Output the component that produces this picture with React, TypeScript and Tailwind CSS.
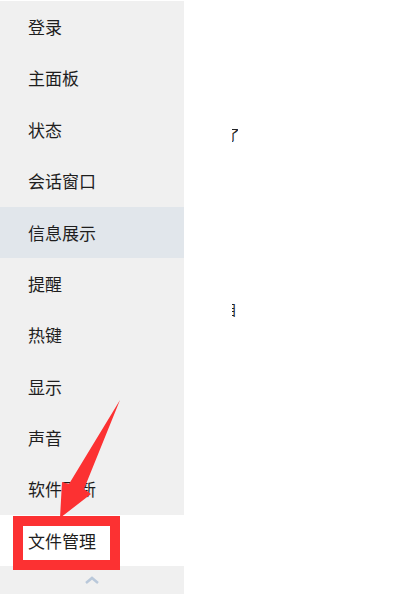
import React from "react";

const items = [
  "登录",
  "主面板",
  "状态",
  "会话窗口",
  "信息展示",
  "提醒",
  "热键",
  "显示",
  "声音",
  "软件更新",
  "文件管理",
];

export default function App() {
  return (
    <div
      className="relative w-[400px] h-[596px] bg-white overflow-hidden flex"
      style={{ fontFamily: '"Noto Sans CJK SC", "Noto Sans", sans-serif' }}
    >
      <div className="w-[184px] h-full flex flex-col">
        <div className="h-[1px] bg-white" />
        {items.map((t, i) => (
          <div
            key={t}
            className={
              "h-[51.4px] flex items-center pl-[28px] text-[17px] text-[#1e1e1e] " +
              (i === 4 ? "bg-[#e1e6eb]" : i === 10 ? "bg-white" : "bg-[#f0f0f0]")
            }
          >
            {t}
          </div>
        ))}
        <div className="h-[28px] bg-[#f0f0f0] flex items-center justify-center">
          <svg width="16" height="8" viewBox="0 0 16 8">
            <path d="M2 7 L8 2 L14 7" fill="none" stroke="#b9c8da" strokeWidth="2.5" />
          </svg>
        </div>
      </div>
      <div className="flex-1 flex flex-col pl-[48px]">
        <div className="mt-[127px] w-[6px] h-[15px] overflow-hidden text-[14px] leading-[15px] text-[#222]">
          <span className="block -ml-[6px]">了</span>
        </div>
        <div className="mt-[160px] w-[5px] h-[15px] overflow-hidden text-[14px] leading-[15px] text-[#222]">
          <span className="block -ml-[9px]">目</span>
        </div>
      </div>
      <div className="absolute left-[13px] top-[516px] w-[107px] h-[54px] border-[10px] border-[#fc3132]" />
      <svg className="absolute left-0 top-0" width="400" height="596" viewBox="0 0 400 596">
        <polygon
          points="120,400 84,489 91,494 60,518 62,482 69,484"
          fill="#fc3132"
        />
      </svg>
    </div>
  );
}
